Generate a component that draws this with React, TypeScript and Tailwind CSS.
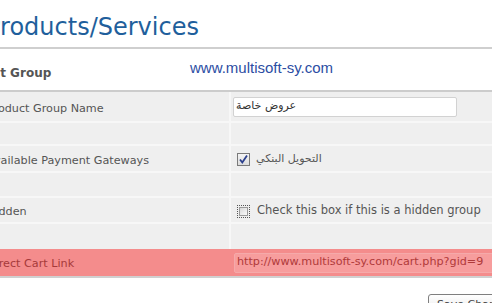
import React from "react";

const rowBg = "bg-[#efefef]";

function Sep() {
  return <div className="h-[2px] bg-[#f7f7f7]" />;
}

function Row({
  label,
  height,
  children,
}: {
  label?: string;
  height: string;
  children?: React.ReactNode;
}) {
  return (
    <div className={`flex ${height} ${rowBg}`}>
      <div className="w-[243px] shrink-0 flex items-center pl-[1px] pt-[5px] text-[11.2px] text-[#555]">
        {label}
      </div>
      <div className="w-[2px] shrink-0 bg-[#f7f7f7]" />
      <div className="flex-1 flex items-center">{children}</div>
    </div>
  );
}

function CheckBox({ checked }: { checked?: boolean }) {
  if (checked) {
    return (
      <span className="w-[13px] h-[13px] border border-[#7a7a7a] bg-gradient-to-b from-[#f4f4f4] to-[#dcdcdc] flex items-center justify-center">
        <svg width="11" height="11" viewBox="0 0 11 11">
          <path d="M2 5.5 L4.3 8.5 L9 1.5" fill="none" stroke="#2b3f8c" strokeWidth="1.8" />
        </svg>
      </span>
    );
  }
  return (
    <span className="w-[13px] h-[13px] border border-dotted border-[#555] p-[1px] flex">
      <span className="flex-1 border border-[#9a9a9a] bg-gradient-to-br from-[#d8d8d8] to-[#fbfbfb]" />
    </span>
  );
}

export default function App() {
  return (
    <div className="w-[492px] h-[303px] overflow-hidden bg-white font-['DejaVu_Sans',sans-serif]">
      <div className="ml-[-14px] w-[540px]">
        <div className="h-[47px] pt-[11px]">
          <h1 className="text-[24px] leading-[32px] text-[#1f5f9c]">Products/Services</h1>
        </div>
        <div className="h-[2px] bg-[#cfcfcf]" />

        <div className="relative h-[41px] flex items-center pt-[6px]">
          <span className="ml-[-33px] text-[12px] font-bold text-[#555]">Product Group</span>
          <span className="absolute left-[204px] top-[8px] font-['Liberation_Sans',sans-serif] text-[15px] text-[#2c4da3]">
            www.multisoft-sy.com
          </span>
        </div>
        <div className="h-[2px] bg-[#cccccc]" />

        <Row label="Product Group Name" height="h-[29px]">
          <div className="ml-[2px] w-[224px] h-[20px] bg-white border border-[#d2d2d2] rounded-[2px] flex items-center px-[2px] text-[11px] text-[#333]">
            عروض خاصة
          </div>
        </Row>
        <Sep />
        <Row height="h-[21px]" />
        <Sep />
        <Row label="Available Payment Gateways" height="h-[25px]">
          <div className="ml-[6px] flex items-center gap-[6px] pt-[2px]">
            <CheckBox checked />
            <span className="text-[11px] text-[#555]">التحويل البنكي</span>
          </div>
        </Row>
        <Sep />
        <Row height="h-[23px]" />
        <Sep />
        <Row label="Hidden" height="h-[24px]">
          <div className="ml-[6px] flex items-center gap-[7px] pt-[2px]">
            <CheckBox />
            <span className="text-[11.5px] text-[#555]">Check this box if this is a hidden group</span>
          </div>
        </Row>
        <Sep />
        <Row height="h-[25px]" />

        <div className="flex h-[27px] bg-[#f48c8c]">
          <div className="w-[243px] shrink-0 flex items-center pl-[1px] pt-[4px] text-[11.2px] text-[#a63a3a]">
            Direct Cart Link
          </div>
          <div className="w-[2px] shrink-0" />
          <div className="flex-1 flex items-center">
            <div className="ml-[3px] w-[300px] h-[20px] bg-[#f79d9d] border border-[#f5aaaa] rounded-[2px] flex items-center px-[2px] text-[11.2px] text-[#b03a3a]">
              http://www.multisoft-sy.com/cart.php?gid=9
            </div>
          </div>
        </div>
        <div className="h-[2px] bg-[#d0d0d0]" />

        <div className="pl-[442px] pt-[13px]">
          <button className="w-[100px] h-[22px] border border-[#7f7f7f] rounded-[3px] bg-gradient-to-b from-white to-[#e6e6e6] text-[11px] text-[#444] text-left pl-[8px]">
            Save Changes
          </button>
        </div>
      </div>
    </div>
  );
}
